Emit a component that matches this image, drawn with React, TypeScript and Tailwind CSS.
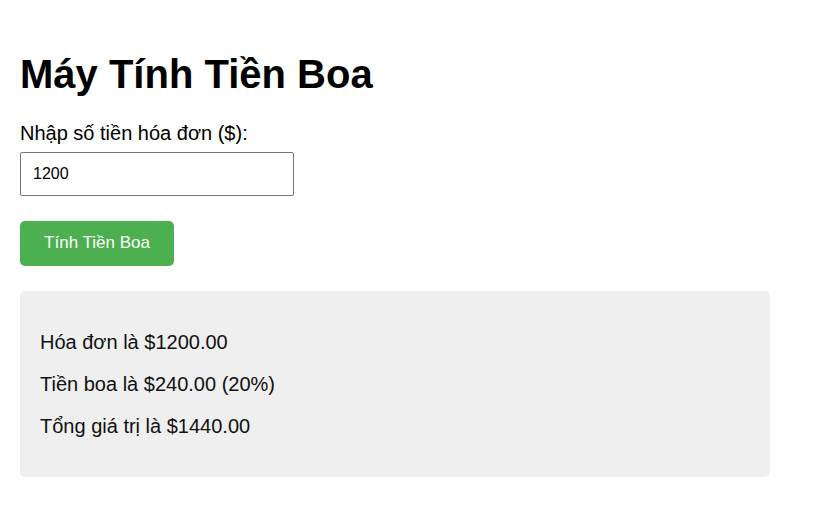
import React, { useState } from 'react';

const App: React.FC = () => {
  const [bill, setBill] = useState('1200');
  const [result, setResult] = useState({ bill: 1200, tip: 240, total: 1440 });

  const calculate = () => {
    const amount = parseFloat(bill) || 0;
    const tip = amount * 0.2;
    setResult({ bill: amount, tip, total: amount + tip });
  };

  return (
    <div className="min-h-screen bg-white px-5 pt-[51px] pb-5 text-black font-['Liberation_Sans',Arial,sans-serif]">
      <div className="w-[750px]">
        <h1 className="text-[40px] leading-[46px] font-bold">Máy Tính Tiền Boa</h1>

        <label className="block mt-[25px] mb-[7px] text-[20px] leading-[23px]">Nhập số tiền hóa đơn ($):</label>
        <input
          type="number"
          value={bill}
          onChange={(e) => setBill(e.target.value)}
          className="block w-[274px] h-[44px] px-3 border border-[#767676] rounded-[2px] text-base outline-none [appearance:textfield]"
        />

        <button
          onClick={calculate}
          className="block mt-[25px] w-[154px] h-[45px] pb-[2px] bg-[#4CAF50] text-white text-[17px] rounded-[5px]"
        >
          Tính Tiền Boa
        </button>

        <div className="mt-[25px] bg-[#efefef] rounded-[5px] p-5 text-[20px] leading-[22px] text-[#111]">
          <p className="my-5">Hóa đơn là ${result.bill.toFixed(2)}</p>
          <p className="my-5">Tiền boa là ${result.tip.toFixed(2)} (20%)</p>
          <p className="my-5">Tổng giá trị là ${result.total.toFixed(2)}</p>
        </div>
      </div>
    </div>
  );
};

export default App;
